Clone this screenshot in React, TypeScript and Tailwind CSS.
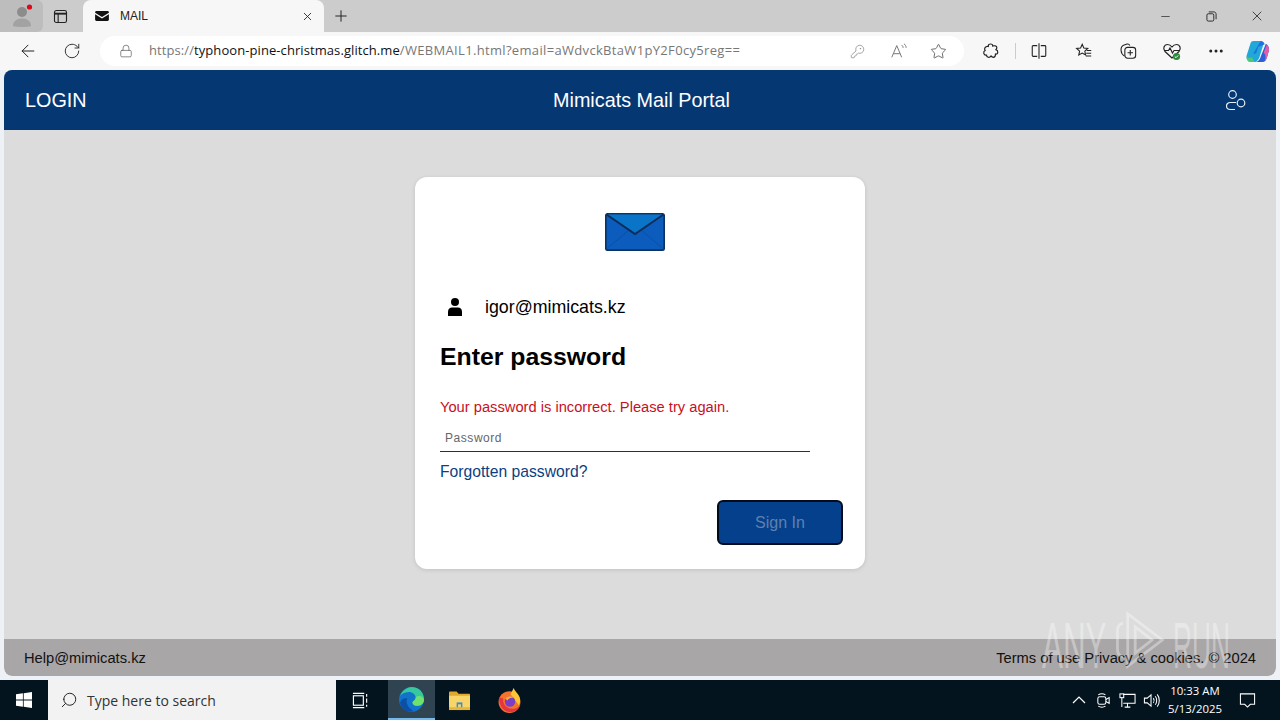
import { ArrowLeft, Ellipsis, KeyRound, Lock, Minus, Plus, RotateCw, Search, Star, X } from 'lucide-react';

function MailGlyph({ className }: { className?: string }) {
  return (
    <svg viewBox="0 0 14 12" className={className}>
      <path d="M1.500 1h11c.8 0 1.400.6 1.400 1.400v.3L7 7 .1 2.700v-.3C.1 1.600.7 1 1.500 1z" fill="#111" />
      <path d="M.1 4.300 7 8.600l6.900-4.300v5.300c0 .8-.6 1.400-1.400 1.400h-11c-.8 0-1.400-.6-1.400-1.400z" fill="#111" />
    </svg>
  );
}

function ProfileIcon() {
  return (
    <svg viewBox="0 0 24 24" className="h-[24px] w-[24px]">
      <circle cx="12" cy="8" r="5" fill="#8c8c8c" />
      <path d="M3 22c0-5 4-7.500 9-7.500s9 2.500 9 7.500c-2 1.300-16 1.300-18 0z" fill="#a2a2a2" />
      <circle cx="19.500" cy="3" r="2.600" fill="#e3051b" />
    </svg>
  );
}

function TabsIcon() {
  return (
    <svg viewBox="0 0 16 16" className="h-[15px] w-[15px]" fill="none" stroke="#222" strokeWidth="1.200">
      <rect x="1.600" y="1.600" width="12.800" height="12.800" rx="2" />
      <path d="M1.600 5h12.800" strokeWidth="2" />
      <path d="M5.500 5v9.400" />
    </svg>
  );
}

function ReadAloudIcon() {
  return (
    <svg viewBox="0 0 20 20" className="h-[18px] w-[18px]" fill="none" stroke="#777" strokeWidth="1.100">
      <path d="M2 17 7.500 4 13 17M4 13h7" />
      <path d="M13 3.500c1 .7 1.600 1.800 1.600 3M15.500 2c1.500 1 2.400 2.600 2.400 4.500" />
    </svg>
  );
}

function ExtensionIcon() {
  return (
    <svg viewBox="0 0 20 20" className="h-[18px] w-[18px]" fill="none" stroke="#222" strokeWidth="1.300">
      <path d="M7 4.500c0-3 5-3 5 0 1-.5 4.500-.5 4.500 1.500 0 1-1 2.500-1 2.500 3 1 2.500 5.500-.5 4.800 0 1.700-.5 3.700-2.500 3.700-1.200 0-2-.8-2.500-1.500-1.500 2.500-5 1.800-5-1-3.500.5-4-4-1.500-5-1.500-2 0-5 3.500-4.500z" />
    </svg>
  );
}

function SplitIcon() {
  return (
    <svg viewBox="0 0 20 20" className="h-[18px] w-[18px]" fill="none" stroke="#222" strokeWidth="1.200">
      <path d="M8 4H3.500a1 1 0 0 0-1 1v10a1 1 0 0 0 1 1H8M12 4h4.500a1 1 0 0 1 1 1v10a1 1 0 0 1-1 1H12M10 1.500v17" />
    </svg>
  );
}

function FavoritesIcon() {
  return (
    <svg viewBox="0 0 20 20" className="h-[18px] w-[18px]" fill="none" stroke="#222" strokeWidth="1.200">
      <path d="m8 2.500 1.800 4.200 4.400.4-3.300 3 .9 4.400L8 12.300l-3.800 2.200.9-4.400-3.300-3 4.400-.4z" />
      <path d="M13 9.500h5M12.500 12.500h5.500M12 15.500h6" />
    </svg>
  );
}

function CollectionsIcon() {
  return (
    <svg viewBox="0 0 20 20" className="h-[18px] w-[18px]" fill="none" stroke="#222" strokeWidth="1.200">
      <rect x="6.500" y="6" width="12" height="12" rx="3" />
      <path d="M12.500 9v6M9.500 12h6" />
      <path d="M6 15.500c-2-1-3.500-3.500-3.700-6C2 6.500 3 4.500 5 3.500l4-1.200c1.500-.3 2.500.4 3 1.500" />
    </svg>
  );
}

function HealthIcon() {
  return (
    <svg viewBox="0 0 20 20" className="h-[20px] w-[20px]">
      <path d="M10 17 3 10.500C.5 8 2 3.500 5.500 3.500c2 0 3.500 1.200 4.500 2.500 1-1.300 2.500-2.500 4.500-2.500C18 3.500 19.500 8 17 10.500z" fill="none" stroke="#222" strokeWidth="1.200" />
      <path d="M2.500 9.500h4l1.500-2.500 2.500 5 1.500-2.500h5" fill="none" stroke="#222" strokeWidth="1.100" />
      <circle cx="14.500" cy="15.500" r="3.600" fill="#2c8a3a" />
      <path d="m12.800 15.500 1.200 1.200 2.200-2.300" fill="none" stroke="#fff" strokeWidth="1" />
    </svg>
  );
}

function CopilotIcon() {
  return (
    <svg viewBox="0 0 24 24" className="h-[25px] w-[25px]">
      <path d="M8 2h7c1.500 0 2.500 1 3 2l-4 13c-.5 2-2 4-4 5H5c-2 0-4-3-3.500-6L5 5c.5-2 1.500-3 3-3z" fill="#21a7d8" />
      <path d="M10 22h7c2 0 3-1 4-4l2-7c.5-2.500-.5-5-3-6.500L15 17c-.5 2.500-2.500 5-5 5z" fill="#2f5fd7" />
      <path d="M15 2c1.500 0 3 1 4 3l-5 2c-1 .5-1.500 1-1.800 2L11 13c-.5 1-2 1.500-3 1z" fill="#1f72e0" />
      <path d="M5 22c-2 0-3.500-2-3.500-5 1 1 3 1.500 5 .5l3 4.500z" fill="#4cc77b" />
      <path d="M21 5c1.500 2 2.500 4 2 6l-2 7c-.5 1-1 2-2 3 1-3 1-6-1-8z" fill="#e05fa8" />
    </svg>
  );
}

function PeopleIcon() {
  return (
    <svg viewBox="0 0 24 24" className="h-[24px] w-[24px]" fill="none" stroke="#e6eef8" strokeWidth="1.200">
      <circle cx="9.500" cy="6.500" r="3.800" />
      <path d="M13 14.500H7.500c-2.500 0-4 1.500-4 3.500s1.500 3.500 4 3.500H12" />
      <circle cx="18" cy="15" r="3.800" />
    </svg>
  );
}

function EnvelopeIcon() {
  return (
    <svg viewBox="0 0 60 38" className="h-[38px] w-[60px]">
      <rect x="0.800" y="0.800" width="58.400" height="36.400" rx="2" fill="#0b5cbc" stroke="#0c3461" strokeWidth="1.700" />
      <path d="M1.500 1.500 30 21 58.500 1.500z" fill="#0a74c9" />
      <path d="M1.500 36 24 17M58.500 36 36 17" stroke="#0a50a6" strokeWidth="1" />
      <path d="M1.500 1.500 30 21 58.500 1.500" fill="none" stroke="#0c2d58" strokeWidth="2" />
    </svg>
  );
}

function UserGlyph() {
  return (
    <svg viewBox="0 0 14 18" className="h-[18px] w-[14px]">
      <circle cx="7" cy="4" r="4" fill="#000" />
      <path d="M0 18v-4.500C0 10.800 2 9.500 4 9.500h6c2 0 4 1.300 4 4V18z" fill="#000" />
    </svg>
  );
}

function WindowsLogo() {
  return (
    <svg viewBox="0 0 16 16" className="h-[16px] w-[16px]" fill="#fff">
      <path d="M0 2.300 6.900 1.300v6.300H0zM7.700 1.200 16 0v7.600H7.700zM0 8.400h6.900v6.300L0 13.700zM7.700 8.400H16V16l-8.300-1.200z" />
    </svg>
  );
}

function TaskViewIcon() {
  return (
    <svg viewBox="0 0 18 18" className="h-[17px] w-[17px]" fill="none" stroke="#fff" strokeWidth="1.200">
      <rect x="1.500" y="4" width="10.500" height="10" />
      <path d="M1 1.500h12M1 16.500h12M15.500 2v3M15.500 7v4.500M15.500 13.500v2" />
    </svg>
  );
}

function EdgeIcon() {
  return (
    <svg viewBox="0 0 24 24" className="h-[25px] w-[25px]">
      <circle cx="12" cy="12" r="12" fill="#1173c9" />
      <path d="M1 9C3 2.500 9 0 12 0c6 0 12 4 12 12 0 3-2 6-6 6-3 0-5-1-5-3s3-2 3-5c0-3-4-6-8-5-4 .5-6 2-7 4z" fill="#37c8a0" />
      <path d="M24 12c0 3-2 6-6 6-3 0-5-1-5-3s3-2 3-5c2-2 7-2 8 2z" fill="#6ee06e" />
      <path d="M8 11c-2 3 0 9 6 12-6 2-12-2-13-8 1-3 4-5 7-4z" fill="#0c4fa8" />
    </svg>
  );
}

function FolderIcon() {
  return (
    <svg viewBox="0 0 24 22" className="h-[21px] w-[23px]">
      <path d="M1 3c0-1 .5-1.500 1.500-1.500H9L11 4h11c.7 0 1 .5 1 1v2H1z" fill="#e0a92c" />
      <path d="M1 6h22v14c0 .7-.5 1-1 1H2c-.5 0-1-.3-1-1z" fill="#f8d568" />
      <rect x="9" y="13" width="6" height="8" fill="#3b8bd0" />
      <rect x="1" y="18" width="22" height="3" fill="#e7b53d" />
      <rect x="10.500" y="15" width="3" height="3" fill="#f3d777" />
    </svg>
  );
}

function FirefoxIcon() {
  return (
    <svg viewBox="0 0 24 24" className="h-[25px] w-[25px]">
      <circle cx="12" cy="13.500" r="10.500" fill="#f5732b" />
      <path d="M16 0c1 3 4 5 5.500 8.500 1 3 1 5-.5 8L13 6z" fill="#ffc533" />
      <path d="M2 9c0 8 4 14 11 14 4 0 8-2 9.500-7-2 3-5 4-8 4C9 20 5 15 6 10z" fill="#e8343f" />
      <circle cx="12.500" cy="13" r="5" fill="#7a3fc6" />
      <path d="M8 10c2-2 5-3 8-1-3 0-5 1-6 3z" fill="#ffb02e" />
    </svg>
  );
}

function MeetIcon() {
  return (
    <svg viewBox="0 0 18 18" className="h-[17px] w-[17px]" fill="none" stroke="#fff" strokeWidth="1.100">
      <rect x="3" y="5" width="8.500" height="8" rx="2" />
      <path d="m11.500 8 3.500-2v6l-3.500-2M3.500 3c2-1.500 5.500-1.500 7.500 0M3.500 15c2 1.500 5.500 1.500 7.500 0" />
    </svg>
  );
}

function NetworkIcon() {
  return (
    <svg viewBox="0 0 18 18" className="h-[17px] w-[17px]" fill="none" stroke="#fff" strokeWidth="1.100">
      <path d="M4.500 2.500H17v9.500H4.500M6 16h6M9 12v4" />
      <rect x="1" y="2" width="4" height="4" />
      <path d="M3 6v10" />
    </svg>
  );
}

function SpeakerIcon() {
  return (
    <svg viewBox="0 0 18 18" className="h-[17px] w-[17px]" fill="none" stroke="#fff" strokeWidth="1.100">
      <path d="M1.500 6.500h3l4-3.500v12l-4-3.500h-3z" />
      <path d="M11 6.500c1 1.500 1 3.500 0 5M13 4.500c2 2.500 2 6.500 0 9M15 2.500c3 3.500 3 9.500 0 13" />
    </svg>
  );
}

function NotificationIcon() {
  return (
    <svg viewBox="0 0 18 18" className="h-[17px] w-[17px]" fill="none" stroke="#fff" strokeWidth="1.100">
      <path d="M1.500 2h15v11H12l-3 3-3-3H1.500z" />
    </svg>
  );
}

// sandbox watermark, sits over the footer in the bottom right corner
function AnyRunWatermark() {
  return (
    <div className="pointer-events-none absolute left-[1042px] top-[610px] flex h-[60px] items-start text-[64px] leading-none text-white/35 [font-family:'Liberation_Sans',sans-serif]">
      <span className="mt-[4px] w-[65px] origin-left scale-x-[0.49] whitespace-nowrap">ANY</span>
      <svg viewBox="0 0 60 64" className="ml-[3px] h-[60px] w-[56px]" fill="none" stroke="currentColor" strokeWidth="3">
        <path d="M14 14c-5 1-6 4-6 8v20c0 4 1 7 6 8" />
        <path d="M19 4v56l37-28z" />
        <path d="M27 18v28l18-14z" />
      </svg>
      <span className="ml-[7px] mt-[4px] w-[57px] origin-left scale-x-[0.41] whitespace-nowrap">RUN</span>
    </div>
  );
}

export default function App() {
  return (
    <div className="relative flex h-[720px] w-[1280px] flex-col overflow-hidden bg-[#eef1f6] font-['Liberation_Sans',sans-serif]">
      {/* browser tab strip */}
      <div className="flex h-[32px] shrink-0 items-center bg-[#cccccc]">
        <div className="flex h-full w-[43px] items-center justify-center rounded-r-md bg-[#bdbdbd]">
          <ProfileIcon />
        </div>
        <div className="flex w-[40px] justify-center pr-[6px]">
          <TabsIcon />
        </div>
        <div className="flex h-full w-[241px] items-center rounded-t-lg bg-[#f7f7f7] pl-[12px] pr-[10px]">
          <MailGlyph className="h-[14px] w-[14px]" />
          <span className="ml-[11px] flex-1 text-[12px] text-[#222]">MAIL</span>
          <X className="h-[13px] w-[13px] text-[#222]" strokeWidth={1.6} />
        </div>
        <div className="flex w-[34px] justify-center">
          <Plus className="h-[18px] w-[18px] text-[#222]" strokeWidth={1.3} />
        </div>
        <div className="ml-auto flex items-center">
          <div className="flex w-[46px] justify-center">
            <Minus className="h-[13px] w-[13px] text-[#222]" strokeWidth={1.3} />
          </div>
          <div className="flex w-[46px] justify-center">
            <svg viewBox="0 0 12 12" className="h-[11px] w-[11px]" fill="none" stroke="#222">
              <rect x="1" y="3" width="7.500" height="8" rx="1.500" />
              <path d="M3 1h5.500c1.500 0 2.500 1 2.500 2.500V9" />
            </svg>
          </div>
          <div className="flex w-[46px] justify-center">
            <X className="h-[16px] w-[16px] text-[#222]" strokeWidth={1.2} />
          </div>
        </div>
      </div>

      {/* address bar */}
      <div className="flex h-[38px] shrink-0 items-center bg-[#f7f7f7]">
        <div className="flex w-[56px] justify-center">
          <ArrowLeft className="h-[20px] w-[20px] text-[#222]" strokeWidth={1.2} />
        </div>
        <div className="flex w-[32px] justify-center">
          <RotateCw className="h-[18px] w-[18px] text-[#222]" strokeWidth={1.2} />
        </div>
        <div className="ml-[12px] flex h-[30px] w-[864px] items-center rounded-full bg-white pl-[19px] pr-[17px]">
          <Lock className="h-[14px] w-[14px] text-[#666]" strokeWidth={1.3} />
          <span className="ml-[16px] flex-1 whitespace-nowrap text-[13px] tracking-[0.33px] text-[#777] [font-family:'Open_Sans',sans-serif]">
            <span className="tracking-[0.08px]">
              https://<span className="text-[#111]">typhoon-pine-christmas.glitch.me</span>
            </span>
            /WEBMAIL1.html?email=aWdvckBtaW1pY2F0cy5reg==
          </span>
          <KeyRound className="h-[15px] w-[15px] text-[#888]" strokeWidth={1.2} />
          <div className="ml-[25px]">
            <ReadAloudIcon />
          </div>
          <Star className="ml-[22px] h-[17px] w-[17px] text-[#555]" strokeWidth={1.2} />
        </div>
        <div className="ml-[18px]">
          <ExtensionIcon />
        </div>
        <div className="ml-[15px] h-[16px] w-px bg-[#ccc]" />
        <div className="ml-[14px]">
          <SplitIcon />
        </div>
        <div className="ml-[27px]">
          <FavoritesIcon />
        </div>
        <div className="ml-[26px]">
          <CollectionsIcon />
        </div>
        <div className="ml-[25px]">
          <HealthIcon />
        </div>
        <Ellipsis className="ml-[25px] h-[18px] w-[18px] text-[#222]" />
        <div className="ml-[20px]">
          <CopilotIcon />
        </div>
      </div>

      {/* page */}
      <div className="mx-[4px] flex h-[606px] shrink-0 flex-col overflow-hidden rounded-lg">
        <header className="grid h-[60px] shrink-0 grid-cols-[1fr_auto_1fr] items-center bg-[#053873] pl-[21px] pr-[29px] text-white">
          <span className="pt-[2px] text-[19.800px]">LOGIN</span>
          <span className="ml-[11px] pt-[2px] text-[19.800px]">Mimicats Mail Portal</span>
          <div className="flex justify-end">
            <PeopleIcon />
          </div>
        </header>

        <main className="flex flex-1 justify-center bg-[#dcdcdc] pt-[47px]">
          <div className="h-[392px] w-[450px] rounded-[12px] bg-white pl-[25px] pr-[22px] shadow-[0_1px_4px_rgba(0,0,0,0.12)]">
            <div className="flex justify-center pr-[13px] pt-[36px]">
              <EnvelopeIcon />
            </div>
            <div className="mt-[43px] flex items-center pl-[8px]">
              <UserGlyph />
              <span className="ml-[23px] text-[17.800px] text-black">igor@mimicats.kz</span>
            </div>
            <h1 className="mt-[20px] text-[24.800px] font-bold leading-[32px] text-black">Enter password</h1>
            <p className="mt-[25px] text-[14.700px] leading-[18px] text-[#c8101e]">Your password is incorrect. Please try again.</p>
            <div className="mt-[7px] h-[29px] w-[370px] border-b border-[#053873] pl-[5px] pt-[1px] text-[12px] leading-[29px] tracking-[0.55px] text-[#666]">Password</div>
            <a className="mt-[9px] block text-[15.700px] leading-[22px] text-[#0b3f80]">Forgotten password?</a>
            <div className="mt-[17px] flex justify-end">
              <button className="h-[45px] w-[126px] rounded-[6px] border-2 border-[#020c1c] bg-[#05408c] pt-[1px] text-[16px] text-[#5f80ad]">Sign In</button>
            </div>
          </div>
        </main>

        <footer className="flex h-[37px] shrink-0 items-center justify-between rounded-b-lg bg-[#a9a6a7] px-[20px] pt-[2px] text-[14.700px] text-[#111]">
          <span>Help@mimicats.kz</span>
          <span>Terms of use Privacy &amp; cookies. © 2024</span>
        </footer>
      </div>

      {/* taskbar */}
      <div className="mt-[4px] flex h-[40px] shrink-0 items-center bg-[#04141f] text-white">
        <div className="flex w-[48px] justify-center">
          <WindowsLogo />
        </div>
        <div className="flex h-full w-[288px] items-center bg-[#f2f2f2] pl-[12px]">
          <Search className="h-[18px] w-[18px] -scale-x-100 text-[#222]" strokeWidth={1.3} />
          <span className="ml-[9px] text-[14px] text-[#333] [font-family:'Open_Sans',sans-serif]">Type here to search</span>
        </div>
        <div className="flex w-[52px] justify-center pr-[4px]">
          <TaskViewIcon />
        </div>
        <div className="flex h-full w-[47px] items-center justify-center border-b-[2px] border-[#76b9ed] bg-[#2f4450]">
          <EdgeIcon />
        </div>
        <div className="flex w-[48px] justify-center">
          <FolderIcon />
        </div>
        <div className="flex w-[52px] justify-center">
          <FirefoxIcon />
        </div>
        <div className="ml-auto flex items-center gap-[7px]">
          <svg viewBox="0 0 14 8" className="h-[8px] w-[14px]" fill="none" stroke="#fff" strokeWidth="1.200">
            <path d="m1 7 6-6 6 6" />
          </svg>
          <div className="ml-[1.500px]">
            <MeetIcon />
          </div>
          <NetworkIcon />
          <SpeakerIcon />
          <div className="ml-[-1.500px] w-[60px] text-center text-[11.400px] leading-[18px] [font-family:'Open_Sans',sans-serif]">
            <div>10:33 AM</div>
            <div>5/13/2025</div>
          </div>
          <div className="ml-[7px] mr-[24px]">
            <NotificationIcon />
          </div>
        </div>
      </div>

      <AnyRunWatermark />
    </div>
  );
}
